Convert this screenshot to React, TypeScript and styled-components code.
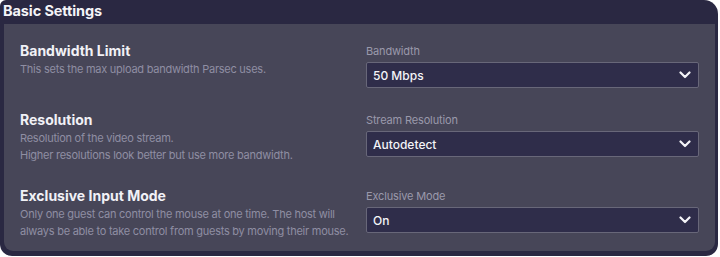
import styled, { createGlobalStyle } from "styled-components";

const GlobalStyle = createGlobalStyle`
  body {
    margin: 0;
    background: #ffffff;
    font-family: Inter, "Noto Sans", sans-serif;
  }
`;

const settings = [
  {
    title: "Bandwidth Limit",
    desc: ["This sets the max upload bandwidth Parsec uses."],
    label: "Bandwidth",
    value: "50 Mbps",
  },
  {
    title: "Resolution",
    desc: [
      "Resolution of the video stream.",
      "Higher resolutions look better but use more bandwidth.",
    ],
    label: "Stream Resolution",
    value: "Autodetect",
  },
  {
    title: "Exclusive Input Mode",
    desc: [
      "Only one guest can control the mouse at one time. The host will",
      "always be able to take control from guests by moving their mouse.",
    ],
    label: "Exclusive Mode",
    value: "On",
  },
];

export default function App() {
  return (
    <>
      <GlobalStyle />
      <Frame>
        <Header>Basic Settings</Header>
        <Panel>
          {settings.map((s) => (
            <Row key={s.title}>
              <Info>
                <Title>{s.title}</Title>
                <Desc>
                  {s.desc.map((line) => (
                    <span key={line}>{line}</span>
                  ))}
                </Desc>
              </Info>
              <Field>
                <Label>{s.label}</Label>
                <Select>
                  <span>{s.value}</span>
                  <svg width="12" height="8" viewBox="0 0 12 8">
                    <path
                      d="M1.5 1.5 L6 6 L10.5 1.5"
                      fill="none"
                      stroke="#f4f4f8"
                      strokeWidth="2.2"
                      strokeLinecap="round"
                      strokeLinejoin="round"
                    />
                  </svg>
                </Select>
              </Field>
            </Row>
          ))}
        </Panel>
      </Frame>
    </>
  );
}

const Frame = styled.div`
  width: 718px;
  height: 256px;
  box-sizing: border-box;
  background: #2a2842;
  border-radius: 6px 14px 12px 12px;
  display: flex;
  flex-direction: column;
  padding: 0 3px 5px 4px;
`;

const Header = styled.div`
  height: 24px;
  line-height: 21px;
  margin-left: -1px;
  font-size: 14.5px;
  font-weight: 700;
  color: #f4f4f8;
  letter-spacing: -0.1px;
`;

const Panel = styled.div`
  flex: 1;
  background: #474658;
  border-radius: 0 0 9px 9px;
  padding: 18px 16px 0 16px;
  display: flex;
  flex-direction: column;
  gap: 23px;
`;

const Row = styled.div`
  display: grid;
  grid-template-columns: minmax(0, 1fr) minmax(0, 1fr);
  column-gap: 13px;
  align-items: start;
`;

const Info = styled.div`
  display: flex;
  flex-direction: column;
`;

const Title = styled.div`
  font-size: 14px;
  line-height: 18px;
  font-weight: 700;
  color: #f1f1f6;
`;

const Desc = styled.div`
  margin-top: 1px;
  display: flex;
  flex-direction: column;
  font-size: 11px;
  line-height: 17px;
  letter-spacing: -0.25px;
  color: #8f8ea3;
  white-space: nowrap;
`;

const Field = styled.div`
  display: flex;
  flex-direction: column;
`;

const Label = styled.div`
  font-size: 11px;
  line-height: 18px;
  letter-spacing: -0.15px;
  color: #9a99ab;
`;

const Select = styled.div`
  margin-top: 2px;
  height: 26px;
  box-sizing: border-box;
  background: #2f2d4a;
  border: 1px solid #686779;
  border-radius: 2px;
  display: flex;
  align-items: center;
  justify-content: space-between;
  padding: 0 7px 0 6px;
  font-size: 12px;
  font-weight: 500;
  color: #f4f4f8;
`;
